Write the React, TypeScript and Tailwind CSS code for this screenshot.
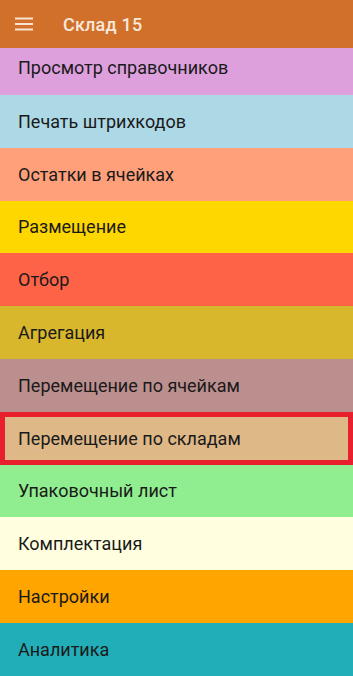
const items: { label: string; bg: string }[] = [
  { label: "Печать штрихкодов", bg: "bg-[#ADD8E6]" },
  { label: "Остатки в ячейках", bg: "bg-[#FFA07A]" },
  { label: "Размещение", bg: "bg-[#FFD700]" },
  { label: "Отбор", bg: "bg-[#FF6347]" },
  { label: "Агрегация", bg: "bg-[#D8B72C]" },
  { label: "Перемещение по ячейкам", bg: "bg-[#BC8F8F]" },
  { label: "Перемещение по складам", bg: "bg-[#DEB887]" },
  { label: "Упаковочный лист", bg: "bg-[#90EE90]" },
  { label: "Комплектация", bg: "bg-[#FFFFE0]" },
  { label: "Настройки", bg: "bg-[#FFA500]" },
  { label: "Аналитика", bg: "bg-[#22AEB8]" },
];

export default function App() {
  return (
    <div
      className="h-[676px] w-[353px] flex flex-col overflow-hidden text-[#1a1a1a]"
      style={{ fontFamily: "Roboto, 'Noto Sans', sans-serif" }}
    >
      <header className="h-12 shrink-0 bg-[#D0702A] flex items-center">
        <svg className="ml-[15px] w-[18px] h-[14px]" viewBox="0 0 18 14">
          <rect x="0" y="0.5" width="18" height="2" fill="#F6E3D2" />
          <rect x="0" y="6" width="18" height="2" fill="#F6E3D2" />
          <rect x="0" y="11.5" width="18" height="2" fill="#F6E3D2" />
        </svg>
        <h1 className="ml-[30px] text-[18px] font-medium text-[#F8E8DA] tracking-[0.2px]">
          Склад 15
        </h1>
      </header>

      {/* first row is partly scrolled under the toolbar */}
      <div className="h-[47px] shrink-0 bg-[#DDA0DD] flex items-center pl-[18px] pb-[9px] text-[18px]">
        Просмотр справочников
      </div>

      {items.map((item) =>
        item.label === "Перемещение по складам" ? (
          <div
            key={item.label}
            className={`h-[52.8px] shrink-0 flex items-center border-[5px] border-[#E8202E] pl-[13px] text-[18px] ${item.bg}`}
          >
            {item.label}
          </div>
        ) : (
          <div
            key={item.label}
            className={`h-[52.8px] shrink-0 flex items-center pl-[18px] text-[18px] ${item.bg}`}
          >
            {item.label}
          </div>
        )
      )}
    </div>
  );
}
